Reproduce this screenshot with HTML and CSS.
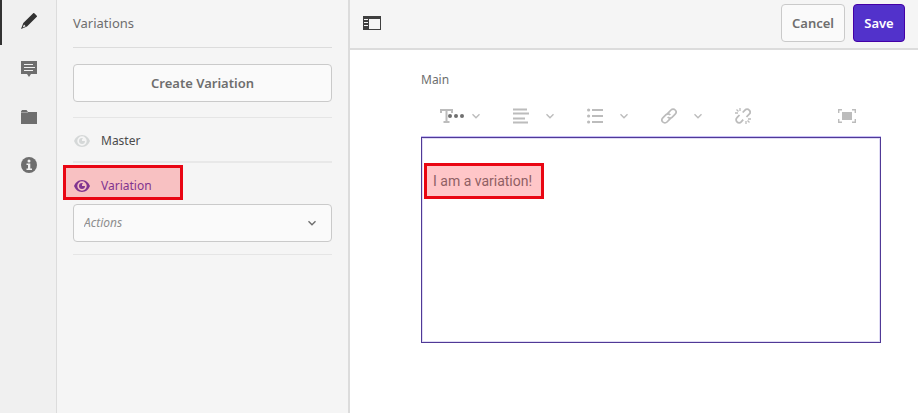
FILE: index.html
```html
<!DOCTYPE html>
<html lang="en">
<head>
<meta charset="utf-8">
<meta name="viewport" content="width=device-width, initial-scale=1">
<title>Variations</title>
<link rel="stylesheet" href="styles.css">
</head>
<body>
<svg class="symbols" aria-hidden="true">
  <symbol id="chevron" viewBox="0 0 10 10"><path d="M1.5 3.2 5 6.7 8.500 3.200" fill="none" stroke="currentColor" stroke-width="1.400"/></symbol>
  <symbol id="eye" viewBox="0 0 16 12"><path fill="currentColor" fill-rule="evenodd" d="M8 0C4 0 1.200 3 0 6c1.200 3 4 6 8 6s6.800-3 8-6C14.800 3 12 0 8 0ZM8 1.300a4.700 4.700 0 0 1 0 9.400 4.700 4.700 0 0 1 0-9.400Z"/><path fill="currentColor" d="M8 3a3 3 0 1 0 3 3H8V4.600L9 3.200A3 3 0 0 0 8 3Z"/></symbol>
</svg>
<div class="app">
  <nav class="rail" aria-label="Panels">
    <button class="rail-item active" aria-label="Edit"><svg viewBox="0 0 16 16"><path fill="currentColor" fill-rule="evenodd" d="M12.200.2a.8.8 0 0 1 1.100 0l2.500 2.500a.8.8 0 0 1 0 1.100L6 13.600 0 16l2.300-6L12.200.2ZM3 11.400l-1.300 3 3-1.200Z"/></svg></button>
    <button class="rail-item" aria-label="Comments"><svg viewBox="0 0 16 16"><path fill="currentColor" d="M0 0h16v13h-6l-2 3-2-3H0Z"/><path d="M3 3.500h9M3 6.500h11M3 9.500h9" stroke="#f0f0f0"/></svg></button>
    <button class="rail-item" aria-label="Folder"><svg viewBox="0 0 16 16"><path fill="currentColor" d="M0 2.500 1 1h4.500L7 3h9v12H0Z"/><path d="M0 3.500h7" stroke="#d0d0d0" stroke-width=".5"/></svg></button>
    <button class="rail-item" aria-label="Information"><svg viewBox="0 0 16 16"><circle cx="8" cy="8" r="8" fill="currentColor"/><circle cx="8" cy="4" r="1.500" fill="#f0f0f0"/><path fill="#f0f0f0" d="M5.500 6.500h3.800v5H11V13H5.500v-1.500H7V8H5.500Z"/></svg></button>
  </nav>
  <aside class="panel">
    <h2 class="panel-title">Variations</h2>
    <button class="button create">Create Variation</button>
    <ul class="list">
      <li class="master"><a class="row" href="#master"><svg class="eye"><use href="#eye"/></svg>Master</a></li>
      <li class="current">
        <a class="row selected" href="#variation"><svg class="eye"><use href="#eye"/></svg>Variation</a>
        <div class="select-wrap">
          <select class="actions" aria-label="Actions"><option>Actions</option></select>
          <svg class="chevron select-chevron"><use href="#chevron"/></svg>
        </div>
      </li>
    </ul>
  </aside>
  <main class="main">
    <header class="topbar">
      <button class="toggle" aria-label="Toggle side panel"><svg viewBox="0 0 18 14"><path fill="currentColor" fill-rule="evenodd" d="M0 0h18v14H0ZM6 3v10h11V3Z"/><path d="M1 3.500h4M1 6.500h4M1 9.500h4" stroke="#f5f5f5"/></svg></button>
      <div class="buttons">
        <button class="button">Cancel</button>
        <button class="button primary">Save</button>
      </div>
    </header>
    <section class="content">
      <h3 class="label" id="main-label">Main</h3>
      <div class="toolbar" role="toolbar" aria-label="Formatting">
        <button class="tool" aria-label="Text format"><svg class="format" viewBox="0 0 26 16"><path d="M2 5V2h11v3M7.500 2v12M4.500 14h6" fill="none" stroke="currentColor" stroke-width="2"/><g fill="#707070"><circle cx="11" cy="8" r="2"/><circle cx="17" cy="8" r="2"/><circle cx="23" cy="8" r="2"/></g></svg><svg class="chevron"><use href="#chevron"/></svg></button>
        <button class="tool" aria-label="Alignment"><svg viewBox="0 0 16 16"><path d="M0 1.500h14M0 5.500h16M0 10.500h12M0 14.500h15" stroke="currentColor" stroke-width="1.800"/></svg><svg class="chevron"><use href="#chevron"/></svg></button>
        <button class="tool" aria-label="Lists"><svg viewBox="0 0 16 16"><path d="M5 2h11M5 8h11M5 14h11" stroke="currentColor" stroke-width="1.800"/><g fill="currentColor"><circle cx="1.600" cy="2" r="1.600"/><circle cx="1.600" cy="8" r="1.600"/><circle cx="1.600" cy="14" r="1.600"/></g></svg><svg class="chevron"><use href="#chevron"/></svg></button>
        <button class="tool" aria-label="Link"><svg viewBox="0 0 16 16"><g fill="none" stroke="currentColor" stroke-width="1.700"><path d="M9.500 9.700a3 3 0 0 1-.3 1L6 14a2.900 2.900 0 0 1-4.200 0 2.900 2.900 0 0 1 0-4.100L5 6.700a2.900 2.900 0 0 1 4.300.3"/><path d="M6.500 6.300a3 3 0 0 1 .3-1L10 2a2.900 2.900 0 0 1 4.200 0 2.900 2.900 0 0 1 0 4.100L11 9.300a2.900 2.900 0 0 1-4.300-.3"/></g></svg><svg class="chevron"><use href="#chevron"/></svg></button>
        <button class="tool" aria-label="Remove link"><svg viewBox="0 0 16 16"><g fill="none" stroke="currentColor" stroke-width="1.800"><path d="M4.500 7 2 9.700a2.900 2.900 0 0 0 0 4.200 2.900 2.900 0 0 0 4.200 0l2-2.200M7.700 4.500 10 2.100a2.900 2.900 0 0 1 4.200 0 2.900 2.900 0 0 1 0 4.100L11.500 9"/><path d="M5 0v3M1.500 1.500l2 2M0 5h3M11 13v3M12.500 12.500l2 2M13 11h3" stroke-width="1.300"/></g></svg></button>
        <button class="tool fullscreen" aria-label="Full screen"><svg viewBox="0 0 18 14"><path fill="currentColor" d="M4 3h10v8H4Z"/><path d="M.7 4V.7H4M14 .7h3.300V4M17.300 10v3.300H14M4 13.300H.7V10" fill="none" stroke="currentColor" stroke-width="1.400"/></svg></button>
      </div>
      <div class="editor" role="textbox" contenteditable="true" aria-multiline="true" aria-labelledby="main-label"><p class="marked">I am a variation!</p></div>
    </section>
  </main>
</div>
</body>
</html>
```

FILE: styles.css
```css
*, *::before { box-sizing: border-box; }
body {
  margin: 0;
  font: 13px/20px "Noto Sans", "Open Sans", sans-serif;
  color: #6e6e6e;
  background: #fff;
}
button, select { font: inherit; color: inherit; }
button { border: 0; padding: 0; background: none; }
svg { display: block; flex: none; }
.symbols { position: absolute; width: 0; height: 0; }
h2, h3, p, ul { margin: 0; padding: 0; font-weight: 400; }

.app { display: flex; min-height: 100vh; }

.rail {
  flex: none;
  width: 57px;
  background: #f0f0f0;
  border-right: 1px solid #dcdcdc;
}
.rail-item {
  display: flex;
  align-items: center;
  justify-content: center;
  width: 100%;
  height: 48px;
  border-left: 2px solid transparent;
}
.rail-item svg { width: 16px; height: 16px; }
.rail-item:first-child { height: 45px; padding-bottom: 3px; }
.rail-item.active { border-color: #323232; color: #323232; }

.panel {
  flex: none;
  width: 293px;
  padding: 0 16px;
  background: #f5f5f5;
  border-right: 2px solid #dcdcdc;
}
.panel-title {
  height: 48px;
  font-size: 13px;
  line-height: 46px;
  border-bottom: 1px solid #dcdcdc;
}
.button {
  height: 38px;
  padding: 0 10px;
  font-weight: 600;
  background: #fafafa;
  border: 1px solid #cacaca;
  border-radius: 4px;
}
.create { width: 100%; margin: 16px 0 15px; }
.primary { min-width: 52px; background: #5232cb; border-color: #4400a6; color: #fff; }

.list { list-style: none; border-top: 1px solid #e5e5e5; }
.master { padding: 5px 0 3px; border-bottom: 2px solid #e8e8e8; }
.current { padding: 5px 0 12px; border-bottom: 1px solid #e5e5e5; }
.row {
  position: relative;
  display: flex;
  align-items: center;
  gap: 11px;
  height: 35px;
  padding-left: 1px;
  color: #4b4b4b;
  font-size: 12px;
  text-decoration: none;
}
.eye { width: 16px; height: 12px; color: #d5d8d8; }
.selected, .selected .eye { color: #813490; }
.selected { isolation: isolate; margin-bottom: 1px; }
.selected::before, .marked::before {
  content: "";
  position: absolute;
  z-index: -1;
  border: 3px solid #e90613;
}
.selected::before { inset: -3px auto 3px -10px; width: 120px; background: #f8c1c2; }

.select-wrap { position: relative; }
.actions {
  appearance: none;
  display: block;
  width: 100%;
  height: 38px;
  padding: 0 10px;
  background: #fafafa;
  border: 1px solid #cacaca;
  border-radius: 4px;
  color: #8e8e8e;
  font-size: 12px;
  font-style: italic;
}
.chevron { width: 10px; height: 10px; }
.select-chevron { position: absolute; right: 15px; top: 14px; pointer-events: none; }

.main { flex: 1; min-width: 0; }
.topbar {
  display: flex;
  align-items: center;
  justify-content: space-between;
  height: 50px;
  padding: 0 13px 2px;
  background: #f5f5f5;
  border-bottom: 2px solid #dcdcdc;
}
.toggle svg { width: 18px; height: 14px; color: #3f3f3f; }
.buttons { display: flex; gap: 8px; }

.content { padding: 20px 37px 16px 71px; }
.label { font-size: 12px; line-height: 20px; }
.toolbar {
  display: grid;
  grid-template-columns: repeat(5, 74px) 1fr;
  align-items: center;
  height: 47px;
  padding: 4px 25px 0 18px;
  color: #bcbcbc;
}
.tool { display: flex; align-items: center; gap: 16px; }
.tool > svg:first-child { width: 16px; height: 16px; }
.tool .format { margin-right: -10px; }
.tool > .format:first-child { width: 26px; }
.fullscreen { justify-self: end; }
.tool.fullscreen > svg { width: 18px; height: 14px; }

.editor {
  min-height: 206px;
  padding: 33px 11px;
  border: 1px solid #503996;
  box-shadow: 0 -1px #c6bdf6, inset 0 0 0 1px #e0dcf4;
  font: 300 14px/20px Roboto, "Open Sans", sans-serif;
  color: #8f5f64;
}
.marked { position: relative; isolation: isolate; width: fit-content; }
.marked::before { inset: -8px -12px -8px -9px; background: #ffc6c8; }
```
